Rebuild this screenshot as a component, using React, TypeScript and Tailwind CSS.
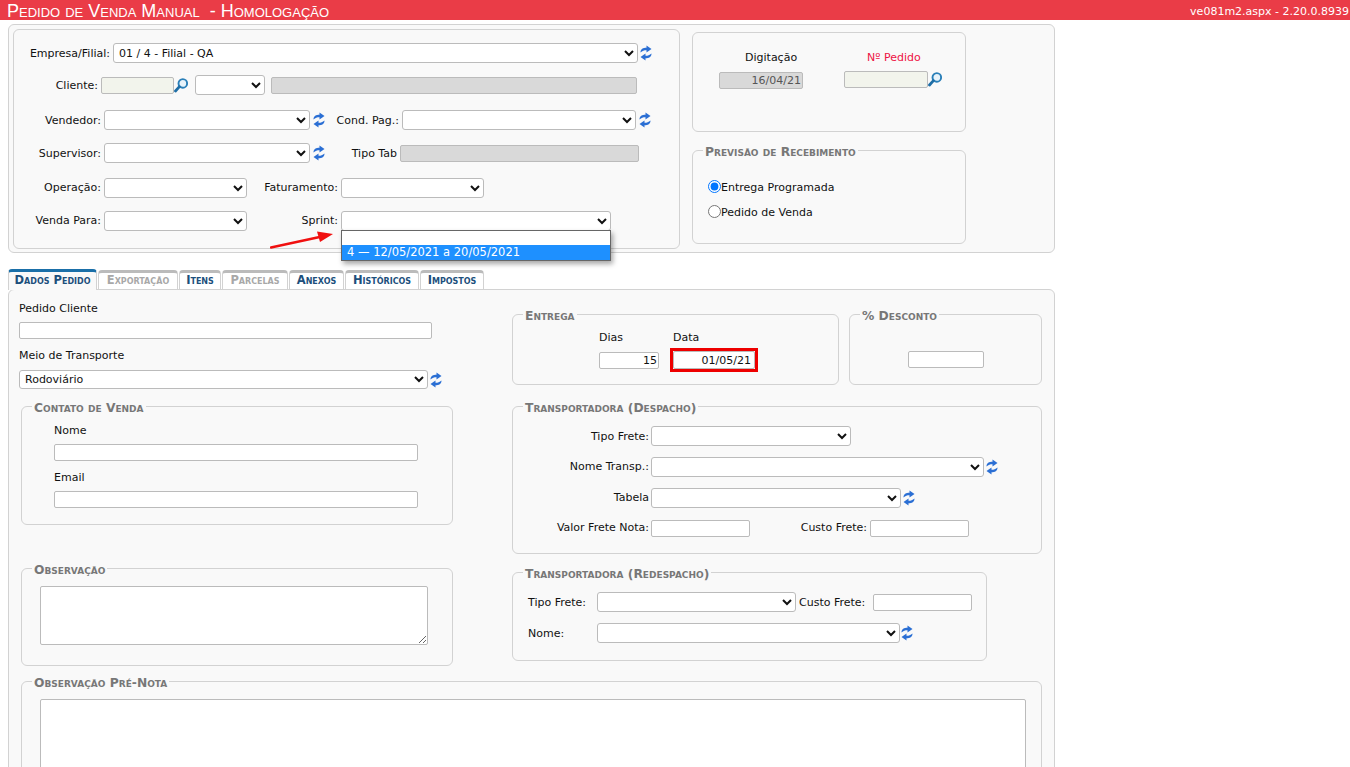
import type { ReactNode } from "react";

function SyncIcon({ className = "" }: { className?: string }) {
  return (
    <svg viewBox="0 0 12 16" className={`w-[12px] h-[16px] shrink-0 ${className}`} fill="#2b6fd4">
      <path d="M0.5 7.5C0.5 4 3 2.8 6.5 2.8L6.5 0.5L11.5 4L6.5 7.5L6.5 5.2C4 5.2 2.5 5.8 0.5 7.5Z" />
      <path d="M11.5 8.5C11.5 12 9 13.2 5.5 13.2L5.5 15.5L0.5 12L5.5 8.5L5.5 10.8C8 10.8 9.5 10.2 11.5 8.5Z" />
    </svg>
  );
}

function SearchIcon() {
  return (
    <svg viewBox="0 0 14 15" className="w-[14px] h-[15px] shrink-0" fill="none">
      <circle cx="8.8" cy="5.4" r="4.3" fill="#e8f3fa" stroke="#2a7fb8" strokeWidth="1.9" />
      <path d="M5.2 8.9L1.5 13" stroke="#1f6ea6" strokeWidth="2.8" strokeLinecap="round" />
    </svg>
  );
}

function Label({ className, children }: { className: string; children: ReactNode }) {
  return <span className={`shrink-0 text-right whitespace-nowrap ${className}`}>{children}</span>;
}

function Select({ className, value = "", h = "h-[20px]" }: { className: string; value?: string; h?: string }) {
  return (
    <select
      defaultValue={value}
      className={`shrink-0 ${h} bg-white border border-[#bbbbbb] rounded-[3px] pl-[1px] text-[11px] text-[#111] ${className}`}
    >
      <option value={value}>{value}</option>
    </select>
  );
}

function Input({ className, value = "", h = "h-[17px]", pr = "pr-[1px]" }: { className: string; value?: string; h?: string; pr?: string }) {
  return (
    <input
      readOnly
      value={value}
      className={`shrink-0 ${h} ${pr} border border-[#bbbbbb] rounded-[2px] pl-[3px] text-[11px] text-right ${className}`}
    />
  );
}

function Fieldset({ title, className, children }: { title: string; className: string; children: ReactNode }) {
  return (
    <fieldset className={`border border-[#d2d2d2] rounded-[6px] shrink-0 ${className}`}>
      <legend className="ml-[10px] px-[2px] h-[14px] leading-[18px] text-[12.3px] font-bold text-[#777777] [font-variant:small-caps] whitespace-nowrap">
        {title}
      </legend>
      {children}
    </fieldset>
  );
}

const tabs = [
  { name: "Dados Pedido", width: "w-[89px]", state: "active" },
  { name: "Exportação", width: "w-[80px]", state: "off" },
  { name: "Itens", width: "w-[42px]", state: "on" },
  { name: "Parcelas", width: "w-[66px]", state: "off" },
  { name: "Anexos", width: "w-[55px]", state: "on" },
  { name: "Históricos", width: "w-[74px]", state: "on" },
  { name: "Impostos", width: "w-[64px]", state: "on" },
];

export default function App() {
  return (
    <div className="w-[1350px] h-[767px] overflow-hidden bg-white text-[11px] leading-[14px] text-[#111] font-['DejaVu_Sans',Verdana,sans-serif]">
      {/* title bar */}
      <div className="h-[20px] bg-[#ea3c47] flex items-center justify-between pl-[7px] pr-[1px] text-white">
        <span className="flex items-center pt-[1px] whitespace-nowrap text-[18px] font-['Liberation_Sans',Arial,sans-serif] [font-variant:small-caps]">
          <span>Pedido de Venda Manual</span>
          <span className="ml-[10px]">- Homologação</span>
        </span>
        <span className="pt-[3px]">ve081m2.aspx - 2.20.0.8939</span>
      </div>

      {/* header panel */}
      <div className="relative ml-[8px] mt-[4px] w-[1047px] h-[229px] border border-[#d2d2d2] rounded-[6px] bg-[#f9f9f9] flex items-start pl-[4px] pt-[4px]">
        <div className="relative w-[667px] h-[220px] border border-[#d2d2d2] rounded-[6px] pt-[13px] shrink-0">
          <div className="flex items-center h-[20px]">
            <Label className="w-[96px] mr-[3px] pt-[2px]">Empresa/Filial:</Label>
            <Select className="w-[525px]" value="01 / 4 - Filial - QA" />
            <SyncIcon className="ml-[2px]" />
          </div>
          <div className="flex items-center h-[20px] mt-[12px]">
            <Label className="w-[84px] mr-[3px] pt-[2px]">Cliente:</Label>
            <Input className="w-[73px] bg-[#f2f4ec]" />
            <SearchIcon />
            <Select className="w-[70px] ml-[7px]" />
            <Input className="w-[366px] ml-[6px] bg-[#d9d9d9]" />
          </div>
          <div className="flex items-center h-[20px] mt-[15px]">
            <Label className="w-[87px] mr-[3px] pt-[2px]">Vendedor:</Label>
            <Select className="w-[206px]" />
            <SyncIcon className="ml-[3px]" />
            <Label className="w-[74px] mr-[3px] pt-[2px]">Cond. Pag.:</Label>
            <Select className="w-[234px]" />
            <SyncIcon className="ml-[3px]" />
          </div>
          <div className="flex items-center h-[20px] mt-[13px]">
            <Label className="w-[87px] mr-[3px] pt-[2px]">Supervisor:</Label>
            <Select className="w-[206px]" />
            <SyncIcon className="ml-[3px]" />
            <Label className="w-[72px] mr-[3px] pt-[2px]">Tipo Tab</Label>
            <Input className="w-[239px] bg-[#d9d9d9]" />
          </div>
          <div className="flex items-center h-[20px] mt-[15px]">
            <Label className="w-[87px] mr-[3px]">Operação:</Label>
            <Select className="w-[143px]" />
            <Label className="w-[91px] mr-[3px]">Faturamento:</Label>
            <Select className="w-[143px]" />
          </div>
          <div className="flex items-center h-[20px] mt-[13px]">
            <Label className="w-[87px] mr-[3px]">Venda Para:</Label>
            <Select className="w-[143px]" />
            <Label className="w-[91px] mr-[3px]">Sprint:</Label>
            <div className="relative">
              <Select className="block w-[270px]" />
              {/* open dropdown list */}
              <div className="absolute z-20 left-0 top-[19px] w-[270px] h-[31px] bg-white border border-[#666666] shadow-[2px_3px_5px_rgba(0,0,0,0.35)]">
                <div className="h-[14px]" />
                <div className="h-[15px] leading-[15px] text-[11.5px] bg-[#1e90ff] text-white pl-[5px] whitespace-nowrap">
                  4 — 12/05/2021 a 20/05/2021
                </div>
              </div>
            </div>
          </div>
        </div>

        <div className="ml-[12px] mt-[3px] w-[274px] shrink-0">
          <div className="h-[100px] border border-[#d2d2d2] rounded-[6px] flex pt-[18px]">
            <div className="ml-[26px] w-[84px] flex flex-col items-start">
              <span className="ml-[26px]">Digitação</span>
              <Input className="w-[84px] mt-[7px] bg-[#d9d9d9] text-[#555555]" value="16/04/21" />
            </div>
            <div className="ml-[41px] flex flex-col items-start">
              <span className="ml-[23px] text-[#ee1144]">Nº Pedido</span>
              <div className="flex items-center mt-[6px]">
                <Input className="w-[84px] bg-[#f2f4ec]" />
                <SearchIcon />
              </div>
            </div>
          </div>
          <Fieldset title="Previsão de Recebimento" className="mt-[11px] h-[101px] w-[274px]">
            <label className="flex items-center mt-[24px] ml-[15px] h-[14px]">
              <input type="radio" name="prev" defaultChecked className="m-0 mb-[4px] w-[13px] h-[13px] accent-[#0075ff]" />
              <span>Entrega Programada</span>
            </label>
            <label className="flex items-center mt-[11px] ml-[15px] h-[14px]">
              <input type="radio" name="prev" className="m-0 mb-[4px] w-[13px] h-[13px]" />
              <span>Pedido de Venda</span>
            </label>
          </Fieldset>
        </div>

        {/* red annotation arrow */}
        <svg viewBox="0 0 70 20" className="absolute z-10 left-[261px] top-[204px] w-[70px] h-[20px]">
          <path d="M1 18.5L52 7.5" stroke="#f01010" strokeWidth="2.4" strokeLinecap="round" />
          <path d="M63 5L47 2.5L50 13Z" fill="#f01010" />
        </svg>
      </div>

      {/* tabs */}
      <div className="relative z-10 ml-[8px] mt-[16px] flex items-end gap-px h-[21px] -mb-px">
        {tabs.map((t) => (
          <div
            key={t.name}
            className={`${t.width} text-center text-[11.5px] font-bold [font-variant:small-caps] whitespace-nowrap rounded-t-[4px] border-x border-[#d2d2d2] ${
              t.state === "active"
                ? "h-[21px] leading-[17px] border-t-[3px] border-t-[#1a6fa8] bg-[#f9f9f9] text-[#1c4f7c]"
                : t.state === "on"
                  ? "h-[20px] leading-[14px] border-t-[3px] border-t-[#bbbbbb] border-b bg-white text-[#1c4f7c]"
                  : "h-[20px] leading-[14px] border-t-[3px] border-t-[#bbbbbb] border-b bg-white text-[#a8a8a8]"
            }`}
          >
            {t.name}
          </div>
        ))}
      </div>

      {/* tab body */}
      <div className="ml-[8px] w-[1047px] h-[600px] border border-[#d2d2d2] rounded-[6px] bg-[#f9f9f9]">
        <div className="flex items-start">
          <div className="ml-[10px] w-[493px] pt-[12px] shrink-0">
            <div>Pedido Cliente</div>
            <Input className="block w-[413px] mt-[6px] bg-white" />
            <div className="mt-[10px]">Meio de Transporte</div>
            <div className="flex items-center mt-[7px]">
              <Select className="w-[409px]" h="h-[19px]" value="Rodoviário" />
              <SyncIcon className="ml-[2px]" />
            </div>
            <Fieldset title="Contato de Venda" className="ml-[2px] mt-[10px] w-[432px] h-[126px]">
              <div className="ml-[32px] mt-[11px]">Nome</div>
              <Input className="block ml-[32px] mt-[6px] w-[364px] bg-white" />
              <div className="ml-[32px] mt-[10px]">Email</div>
              <Input className="block ml-[32px] mt-[6px] w-[364px] bg-white" />
            </Fieldset>
            <Fieldset title="Observação" className="ml-[2px] mt-[36px] w-[432px] h-[105px]">
              <textarea readOnly className="block ml-[18px] mt-[11px] w-[388px] h-[59px] bg-white border border-[#bbbbbb] rounded-[2px]" />
            </Fieldset>
          </div>

          <div className="pt-[17px] w-[530px] shrink-0">
            <div className="flex items-start gap-[10px]">
              <Fieldset title="Entrega" className="w-[327px] h-[78px]">
                <div className="flex ml-[86px] mt-[10px]">
                  <div className="w-[74px]">Dias</div>
                  <div>Data</div>
                </div>
                <div className="flex items-center ml-[86px] mt-[3px]">
                  <Input className="w-[60px] bg-white" value="15" />
                  <div className="ml-[11px] border-[3px] border-[#ee0000] flex">
                    <Input className="w-[82px] bg-white" h="h-[18px]" pr="pr-[3px]" value="01/05/21" />
                  </div>
                </div>
              </Fieldset>
              <Fieldset title="% Desconto" className="w-[193px] h-[78px]">
                <Input className="block ml-[58px] mt-[30px] w-[76px] bg-white" />
              </Fieldset>
            </div>

            <Fieldset title="Transportadora (Despacho)" className="mt-[14px] w-[530px] h-[155px]">
              <div className="flex items-center h-[20px] mt-[13px]">
                <Label className="w-[136px] mr-[2px] pt-[2px]">Tipo Frete:</Label>
                <Select className="w-[200px]" />
              </div>
              <div className="flex items-center h-[20px] mt-[11px]">
                <Label className="w-[136px] mr-[2px]">Nome Transp.:</Label>
                <Select className="w-[333px]" />
                <SyncIcon className="ml-[2px]" />
              </div>
              <div className="flex items-center h-[20px] mt-[11px]">
                <Label className="w-[136px] mr-[2px]">Tabela</Label>
                <Select className="w-[250px]" />
                <SyncIcon className="ml-[2px]" />
              </div>
              <div className="flex items-center h-[20px] mt-[10px]">
                <Label className="w-[136px] mr-[2px]">Valor Frete Nota:</Label>
                <Input className="w-[99px] bg-white" />
                <Label className="w-[117px] mr-[3px]">Custo Frete:</Label>
                <Input className="w-[99px] bg-white" />
              </div>
            </Fieldset>

            <Fieldset title="Transportadora (Redespacho)" className="mt-[11px] w-[475px] h-[96px]">
              <div className="flex items-center h-[20px] mt-[13px]">
                <span className="ml-[15px] w-[69px] shrink-0 pt-[2px]">Tipo Frete:</span>
                <Select className="w-[199px]" />
                <span className="ml-[3px] w-[74px] shrink-0 pt-[2px]">Custo Frete:</span>
                <Input className="w-[99px] bg-white" />
              </div>
              <div className="flex items-center h-[20px] mt-[11px]">
                <span className="ml-[15px] w-[69px] shrink-0 pt-[2px]">Nome:</span>
                <Select className="w-[303px]" />
                <SyncIcon className="ml-[1px]" />
              </div>
            </Fieldset>
          </div>
        </div>

        <Fieldset title="Observação Pré-Nota" className="ml-[12px] mt-[8px] w-[1021px] h-[200px]">
          <textarea readOnly className="block ml-[18px] mt-[11px] w-[986px] h-[120px] bg-white border border-[#bbbbbb] rounded-[2px]" />
        </Fieldset>
      </div>
    </div>
  );
}
